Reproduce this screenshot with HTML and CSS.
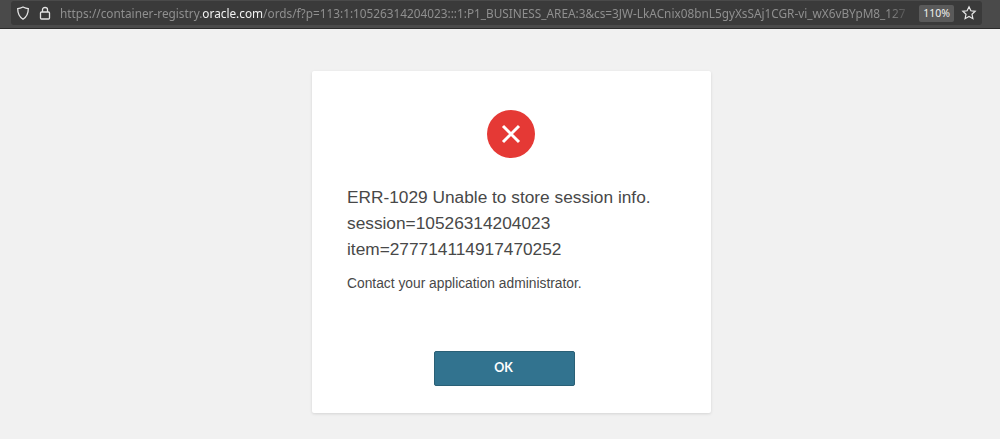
FILE: index.html
```html
<!DOCTYPE html>
<html lang="en">

<head>
    <meta charset="UTF-8">
    <title>Error</title>
    <link rel="stylesheet" href="styles.css">
</head>

<body>
    <div class="toolbar">
        <div class="urlbar">
            <svg class="shield" width="16" height="16" viewBox="0 0 16 16">
                <path d="M8 2 C6 3 4.200 3.500 2.700 3.600 C2.700 8 3.800 11.800 8 14.200 C12.200 11.800 13.300 8 13.300 3.600 C11.800 3.500 10 3 8 2 Z" />
            </svg>
            <svg class="lock" width="14" height="16" viewBox="0 0 14 16">
                <rect x="2.500" y="7" width="9" height="7" rx="1" />
                <path d="M4.500 7 V4.500 C4.500 1.800 9.500 1.800 9.500 4.500 V7" />
            </svg>
            <div class="url">https://container-registry.<b>oracle.com</b>/ords/f?p=113:1:10526314204023:::1:P1_BUSINESS_AREA:3&amp;cs=3JW-LkACnix08bnL5gyXsSAj1CGR-vi_wX6vBYpM8_127</div>
            <span class="zoom">110%</span>
            <svg class="star" width="16" height="16" viewBox="0 0 16 16">
                <path d="M8 1.800 L9.900 5.800 L14.200 6.300 L11 9.300 L11.900 13.700 L8 11.500 L4.100 13.700 L5 9.300 L1.800 6.300 L6.100 5.800 Z" />
            </svg>
        </div>
    </div>

    <div class="page">
        <div class="card">
            <div class="icon">
                <svg width="48" height="48" viewBox="0 0 48 48">
                    <circle cx="24" cy="24" r="24" />
                    <path d="M16 16 L32 32 M32 16 L16 32" />
                </svg>
            </div>
            <h1>ERR-1029 Unable to store session info.<br>session=10526314204023<br>item=277714114917470252</h1>
            <p>Contact your application administrator.</p>
            <div class="actions">
                <button>OK</button>
            </div>
        </div>
    </div>
</body>

</html>
```

FILE: styles.css
```css
html,
body {
    height: 100%;
}

body {
    margin: 0;
    background: #f1f1f1;
    font-family: "Liberation Sans", Arial, sans-serif;
    color: #484848;
    overflow: hidden;
}

.toolbar {
    height: 29px;
    box-sizing: border-box;
    padding: 1px 18px 3px 11px;
    background: #4a4a4a;
    border-bottom: 1px solid #2b2b2b;
}

.urlbar {
    height: 24px;
    display: flex;
    align-items: center;
    padding-left: 4px;
    background: #3a3a3a;
    border-radius: 3px;
}

.shield {
    flex: none;
    fill: none;
    stroke: #e4e4e4;
    stroke-width: 1.3;
}

.lock {
    flex: none;
    margin-left: 7px;
    fill: none;
    stroke: #e4e4e4;
    stroke-width: 1.3;
}

.url {
    flex: 1;
    min-width: 0;
    margin-left: 8px;
    overflow: hidden;
    white-space: nowrap;
    font-family: "Noto Sans", sans-serif;
    font-size: 11.8px;
    color: #8f8f8f;
    -webkit-mask-image: linear-gradient(to right, #000 97%, transparent);
    mask-image: linear-gradient(to right, #000 97%, transparent);
}

.url b {
    font-weight: normal;
    color: #f2f2f2;
}

.zoom {
    flex: none;
    width: 35px;
    height: 17px;
    margin-left: 6px;
    background: #5a5a5a;
    border-radius: 2px;
    font-family: "Noto Sans", sans-serif;
    font-size: 10.5px;
    line-height: 17px;
    text-align: center;
    color: #efefef;
}

.star {
    flex: none;
    margin: 0 5px 0 7px;
    fill: none;
    stroke: #e8e8e8;
    stroke-width: 1.2;
}

.page {
    display: flex;
    justify-content: center;
    padding: 42px 0 0 23px;
}

.card {
    width: 399px;
    height: 342px;
    box-sizing: border-box;
    padding: 39px 49px 0 35px;
    background: #fff;
    border-radius: 2px;
    box-shadow: 0 1px 3px rgba(0, 0, 0, 0.12);
    display: flex;
    flex-direction: column;
}

.icon {
    display: flex;
    justify-content: center;
    height: 48px;
    padding-left: 12px;
}

.icon circle {
    fill: #e53935;
}

.icon path {
    fill: none;
    stroke: #fff;
    stroke-width: 3;
}

h1 {
    margin: 26px 0 0;
    font-size: 17.3px;
    font-weight: normal;
    line-height: 26px;
}

p {
    margin: 12px 0 0;
    font-size: 13.8px;
    line-height: 20px;
}

.actions {
    display: flex;
    justify-content: center;
    margin-top: auto;
    margin-bottom: 27px;
}

button {
    width: 141px;
    height: 35px;
    padding: 0 2px 2px 0;
    background: #32738f;
    border: 1px solid #2a6076;
    border-radius: 2px;
    font-family: "Lato", sans-serif;
    font-size: 12.5px;
    font-weight: bold;
    color: #fff;
}
```
